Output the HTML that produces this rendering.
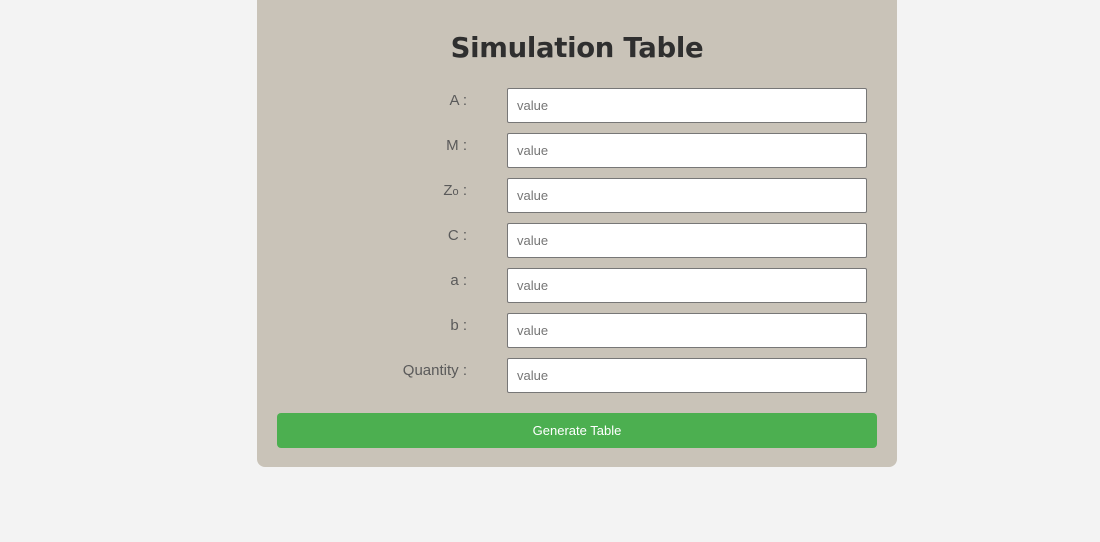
<!DOCTYPE html>
<html><head><style>
body{margin:0;background:#f3f3f3;font-family:"Liberation Sans",sans-serif;width:1100px;height:542px;overflow:hidden;position:relative}
.card{position:absolute;left:257px;top:-10px;width:640px;height:477px;background:#c9c3b8;border-radius:8px}
h1{position:absolute;left:0;width:640px;top:42px;margin:0;text-align:center;font-family:"DejaVu Sans","Liberation Sans",sans-serif;font-weight:bold;font-size:27.5px;color:#2f2f2f;letter-spacing:-0.3px}
.lab{position:absolute;right:430px;font-size:15px;color:#5a5a5a;text-align:right;white-space:nowrap}
.inp{position:absolute;left:250px;background:#fff;border:1px solid #777;border-radius:2px;font-size:13px;color:#757575;line-height:33px;padding-left:9px;box-sizing:border-box;width:360px;height:35px}
.btn{position:absolute;left:20px;top:423px;width:600px;height:35px;background:#4caf50;border-radius:4px;color:#fff;font-size:13px;text-align:center;line-height:35px}
</style></head><body>
<div class="card">
<h1>Simulation Table</h1>
<div class="lab" style="top:102px">A :</div><div class="inp" style="top:98px">value</div>
<div class="lab" style="top:147px">M :</div><div class="inp" style="top:143px">value</div>
<div class="lab" style="top:192px">Z<span style="font-size:11px">o</span> :</div><div class="inp" style="top:188px">value</div>
<div class="lab" style="top:237px">C :</div><div class="inp" style="top:233px">value</div>
<div class="lab" style="top:282px">a :</div><div class="inp" style="top:278px">value</div>
<div class="lab" style="top:327px">b :</div><div class="inp" style="top:323px">value</div>
<div class="lab" style="top:372px">Quantity :</div><div class="inp" style="top:368px">value</div>
<div class="btn">Generate Table</div>
</div>
</body></html>
